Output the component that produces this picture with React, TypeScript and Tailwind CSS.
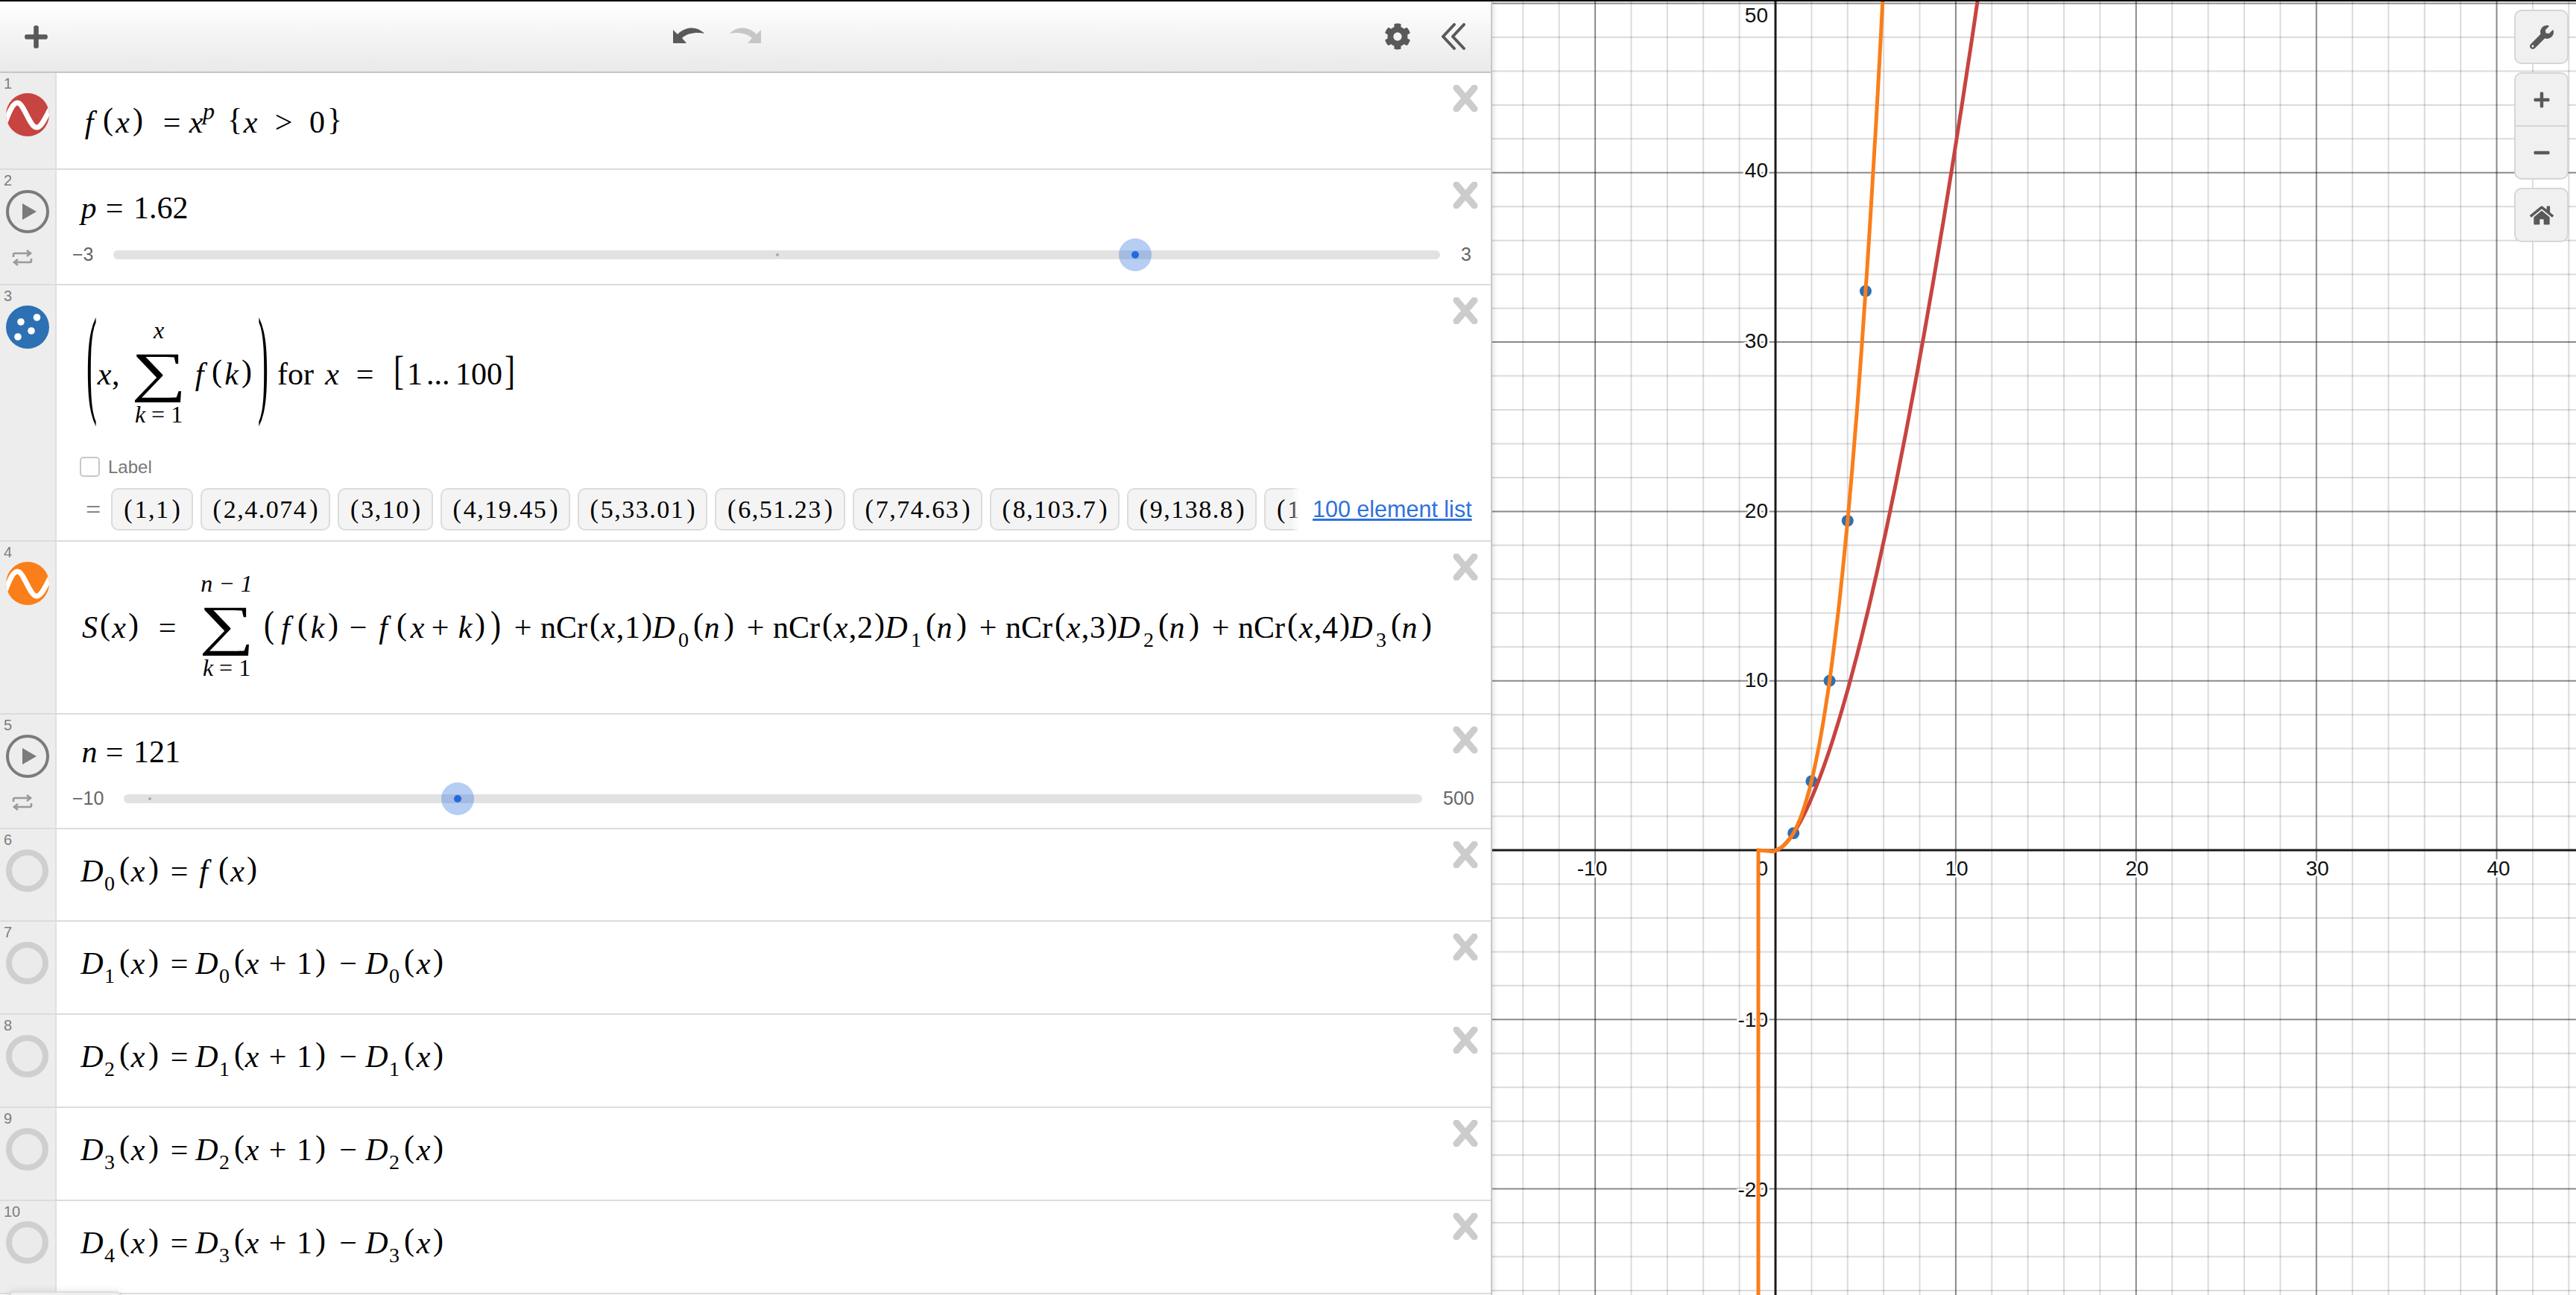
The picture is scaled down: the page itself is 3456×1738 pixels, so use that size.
import type { ReactNode } from "react"
import { FaCog, FaHome, FaMinus, FaPlus, FaWrench } from "react-icons/fa"

const RED = "#c74440"
const ORANGE = "#fa7e19"
const BLUE = "#2d70b3"

type Kids = { children?: ReactNode; className?: string }

// plain math token, width given by the caller so the formula lines up
function T({ className = "", children }: Kids) {
  return <span className={`shrink-0 text-center ${className}`}>{children}</span>
}
function V({ className = "", children }: Kids) {
  return <T className={`italic ${className}`}>{children}</T>
}
function Sub({ className = "w-[14px]", children }: Kids) {
  return <T className={`translate-y-[17px] text-[28px] ${className}`}>{children}</T>
}
// bracket, lifted onto the math axis
function P({ className = "w-[13px]", children }: Kids) {
  return <T className={`-translate-y-[4px] ${className}`}>{children}</T>
}
// bracket stretched round a taller expression
function Big({ className = "", children }: Kids) {
  return <T className={`w-[14px] origin-[50%_60%] ${className}`}>{children}</T>
}
// square bracket, stretched about the baseline
function Square({ className = "", children }: Kids) {
  return <T className={`w-[13px] origin-[50%_85%] scale-y-[1.3] ${className}`}>{children}</T>
}
function Line({ className = "", children }: Kids) {
  return (
    <div className={`flex h-[40px] items-center whitespace-nowrap font-['Liberation_Serif',serif] text-[42px] leading-[40px] text-black ${className}`}>
      {children}
    </div>
  )
}

function Sum({ upper }: { upper: ReactNode }) {
  return (
    <span className="flex w-[66px] shrink-0 -translate-y-[3px] flex-col items-center text-[32px] leading-[28px]">
      <span className="h-[28px] italic">{upper}</span>
      <span className="flex h-[85px] scale-x-[1.4] items-center text-[74px] leading-none">∑</span>
      <span className="h-[28px]">
        <i>k</i> = 1
      </span>
    </span>
  )
}

function WaveIcon({ color }: { color: string }) {
  return (
    <svg width="58" height="58" viewBox="0 0 58 58">
      <clipPath id={`w${color}`}>
        <circle cx="29" cy="29" r="29" />
      </clipPath>
      <circle cx="29" cy="29" r="29" fill={color} />
      <path
        d="M-2 42C6 20 11 12 16 13C24 14 32 46 41 46C48 46 53 32 60 20"
        fill="none"
        stroke="#fff"
        strokeWidth="7"
        clipPath={`url(#w${color})`}
      />
    </svg>
  )
}

function PointsIcon() {
  return (
    <svg width="58" height="58" viewBox="0 0 58 58">
      <circle cx="29" cy="29" r="29" fill={BLUE} />
      <circle cx="20" cy="22" r="4.8" fill="#fff" />
      <circle cx="41.5" cy="16" r="4.8" fill="#fff" />
      <circle cx="34" cy="34" r="4.8" fill="#fff" />
      <circle cx="16" cy="42" r="4.8" fill="#fff" />
    </svg>
  )
}

function PlayIcon() {
  return (
    <svg width="58" height="58" viewBox="0 0 58 58">
      <circle cx="29" cy="29" r="27" fill="none" stroke="#7b7b7b" strokeWidth="4" />
      <path d="M22 18L41 29L22 40Z" fill="#7b7b7b" />
    </svg>
  )
}

function RepeatIcon() {
  return (
    <svg width="30" height="22" viewBox="0 0 30 22" fill="none" stroke="#9a9a9a" strokeWidth="2.6" className="ml-[15px] mt-[22px]">
      <path d="M3 10V7Q3 5 5 5H26M21 1L26 5L21 9" />
      <path d="M27 12V15Q27 17 25 17H4M9 13L4 17L9 21" />
    </svg>
  )
}

function HiddenIcon() {
  return <div className="size-[57px] rounded-full border-[8px] border-[#cfcfcf] bg-[#ebebeb]" />
}

function Row({ n, h, icon, extra, children }: { n: number; h: string; icon: ReactNode; extra?: ReactNode; children: ReactNode }) {
  return (
    <div className={`relative flex border-b-2 border-[#dcdcdc] ${h}`}>
      <div className="w-[76px] shrink-0 border-r-2 border-[#dfdfdf] bg-[#ededed]">
        <div className="ml-[5px] mt-[4px] h-[20px] text-[20px] leading-[20px] text-[#7d7d7d]">{n}</div>
        <div className="ml-[8px] mt-[3px]">{icon}</div>
        {extra}
      </div>
      <div className="min-w-0 flex-1">{children}</div>
      <svg width="36" height="36" viewBox="0 0 36 36" className="absolute left-[1948px] top-[16px]">
        <path d="M6 4L30 32M30 4L6 32" stroke="#cccccc" strokeWidth="9" strokeLinecap="round" />
      </svg>
    </div>
  )
}

function Slider({ min, max, track, gap, at, tick }: { min: string; max: string; track: string; gap: string; at: number; tick: number }) {
  return (
    <div className="mt-[37px] flex h-[12px] items-center pl-[21px] text-[25px] text-[#666]">
      <span className={gap}>{min}</span>
      <div className={`relative h-[12px] shrink-0 rounded-full bg-[#e2e2e2] ${track}`}>
        <span className="absolute top-[4px] size-[4px] rounded-full bg-[#a8a8a8]" style={{ left: tick - 2 }} />
        <span className="absolute -top-[16px] size-[44px] rounded-full bg-[#2e6fe0]/35" style={{ left: at - 22 }} />
        <span className="absolute top-[1px] size-[10px] rounded-full bg-[#2468dc]" style={{ left: at - 5 }} />
      </div>
      <span className="ml-[28px]">{max}</span>
    </div>
  )
}

function DRow({ n, i, a }: { n: number; i: string; a: string }) {
  return (
    <Row n={n} h="h-[125px]" icon={<HiddenIcon />}>
      <Line className="ml-[31px] mt-[36px]">
        <DHead i={i} />
        <V className="ml-[7px] w-[33px]">D</V>
        <Sub>{a}</Sub>
        <P className="ml-[6px] w-[13px]">(</P>
        <V className="w-[22px]">x</V>
        <T className="ml-[8px] w-[31px]">+</T>
        <T className="ml-[10px] w-[20px]">1</T>
        <P className="ml-[5px] w-[13px]">)</P>
        <T className="ml-[16px] w-[30px]">−</T>
        <V className="ml-[7px] w-[33px]">D</V>
        <Sub>{a}</Sub>
        <P className="ml-[6px] w-[13px]">(</P>
        <V className="w-[26px]">x</V>
        <P>)</P>
      </Line>
    </Row>
  )
}

// D_i(x) =
function DHead({ i }: { i: string }) {
  return (
    <>
      <V className="w-[33px]">D</V>
      <Sub>{i}</Sub>
      <P className="ml-[6px] w-[13px]">(</P>
      <V className="w-[24px]">x</V>
      <P className="ml-[2px] w-[13px]">)</P>
      <T className="ml-[15px] w-[27px]">=</T>
    </>
  )
}

function Term({ k, d }: { k: string; d: string }) {
  return (
    <>
      <T className="ml-[14px] w-[31px]">+</T>
      <T className="ml-[8px] w-[61px]">nCr</T>
      <P className="ml-[5px] w-[13px]">(</P>
      <V className="ml-[2px] w-[20px]">x</V>
      <T className="w-[12px]">,</T>
      <T className="w-[18px]">{k}</T>
      <P className="ml-[5px] w-[13px]">)</P>
      <V className="w-[33px]">D</V>
      <Sub className="w-[20px]">{d}</Sub>
      <P className="ml-[3px] w-[13px]">(</P>
      <V className="w-[24px]">n</V>
      <P className="ml-[4px] w-[13px]">)</P>
    </>
  )
}

const chips = [
  { w: "w-[110px]", t: "1,1" },
  { w: "w-[174px]", t: "2,4.074" },
  { w: "w-[128px]", t: "3,10" },
  { w: "w-[174px]", t: "4,19.45" },
  { w: "w-[174px]", t: "5,33.01" },
  { w: "w-[175px]", t: "6,51.23" },
  { w: "w-[174px]", t: "7,74.63" },
  { w: "w-[174px]", t: "8,103.7" },
  { w: "w-[174px]", t: "9,138.8" },
]

const chipBox = "flex h-[57px] shrink-0 items-center rounded-[10px] border-2 border-[#dcdcdc] bg-[#f4f4f4] font-['Liberation_Serif',serif] text-[34px] leading-[34px] text-black"

function ListRow() {
  return (
    <div className="mt-[15px] flex h-[57px] items-center pl-[39px]">
      <span className="w-[34px] shrink-0 font-['Liberation_Serif',serif] text-[36px] text-[#777]">=</span>
      <div className="relative flex w-[1595px] shrink-0 gap-[10px] overflow-hidden">
        {chips.map((c) => (
          <div key={c.t} className={`${chipBox} justify-center ${c.w}`}>
            <span className="origin-[50%_84%] scale-y-[1.08]">(</span>
            <span className="mx-[3px] tracking-[1.5px]">{c.t}</span>
            <span className="origin-[50%_84%] scale-y-[1.08]">)</span>
          </div>
        ))}
        {/* the tenth point runs under the fade, only its start shows */}
        <div className={`${chipBox} w-[80px] pl-[15px]`}>
          <span className="origin-[50%_84%] scale-y-[1.08]">(</span>
          <span className="ml-[3px]">1</span>
        </div>
        <div className="absolute right-0 top-0 h-[57px] w-[12px] bg-gradient-to-r from-white/0 to-white" />
      </div>
      <span className="ml-[17px] whitespace-nowrap text-[30.5px] text-[#2f72dc] underline">100 element list</span>
    </div>
  )
}

function Toolbar() {
  return (
    <div className="relative flex h-[96px] items-center justify-between border-b-2 border-[#c6c6c6] bg-gradient-to-b from-[#ffffff] to-[#e9e9e9] text-[#595959]">
      <FaPlus size={35} className="ml-[31px]" />
      <div className="absolute left-[903px] top-[33px] flex gap-[34px]">
        <svg width="42" height="23" viewBox="0 0 42 23" fill="#595959">
          <path d="M0 5V23H18L12 16C20 9 32 8 42 10C34 2 20-2 6 11Z" />
        </svg>
        <svg width="42" height="23" viewBox="0 0 42 23" fill="#c6c6c6" className="-scale-x-100">
          <path d="M0 5V23H18L12 16C20 9 32 8 42 10C34 2 20-2 6 11Z" />
        </svg>
      </div>
      <div className="flex items-center">
        <FaCog size={36} />
        <svg width="33" height="36" viewBox="0 0 33 36" fill="none" stroke="#595959" strokeWidth="4" strokeLinecap="round" strokeLinejoin="round" className="ml-[41px] mr-[33px]">
          <path d="M17 2L2 18L17 34M30 2L15 18L30 34" />
        </svg>
      </div>
    </div>
  )
}

const X0 = 2382
const Y0 = 1141
const SX = 24.19
const SY = 22.73
const px = (x: number) => X0 + SX * x
const py = (y: number) => Y0 - SY * y

function plot(fn: (x: number) => number, to: number, step: number) {
  let d = ""
  for (let x = step; x <= to; x += step) d += `L${px(x).toFixed(1)} ${py(fn(x)).toFixed(1)}`
  return d
}

const f = (x: number) => Math.pow(x, 1.62)
const S = (x: number) => Math.pow(x, 2.62) / 2.62 + Math.pow(x, 1.62) / 2 + 0.135 * Math.pow(x, 0.62)

const range = (from: number, to: number) => Array.from({ length: to - from + 1 }, (_, i) => from + i)

function Graph() {
  return (
    <svg viewBox="2002 2 1454 1736" width="1454" height="1736" className="block">
      {range(-8, 22).map((k) => (
        <line key={k} x1={px(k * 2)} x2={px(k * 2)} y1="0" y2="1738" stroke="#000" strokeOpacity={k % 5 === 0 ? 0.46 : 0.14} strokeWidth="2" />
      ))}
      {range(-13, 25).map((k) => (
        <line key={k} x1="2000" x2="3456" y1={py(k * 2)} y2={py(k * 2)} stroke="#000" strokeOpacity={k % 5 === 0 ? 0.46 : 0.14} strokeWidth="2" />
      ))}
      <line x1={X0} x2={X0} y1="0" y2="1738" stroke="#1a1a1a" strokeWidth="3" />
      <line x1="2000" x2="3456" y1={Y0} y2={Y0} stroke="#1a1a1a" strokeWidth="3" />
      <g fontFamily="'Liberation Sans', sans-serif" fontSize="28" fill="#111" stroke="#fff" strokeWidth="5" style={{ paintOrder: "stroke" }}>
        <text x="2136" y="1175" textAnchor="middle">-10</text>
        <text x="2625" y="1175" textAnchor="middle">10</text>
        <text x="2867" y="1175" textAnchor="middle">20</text>
        <text x="3109" y="1175" textAnchor="middle">30</text>
        <text x="3352" y="1175" textAnchor="middle">40</text>
        <text x="2372" y="1175" textAnchor="end">0</text>
        <text x="2372" y="30" textAnchor="end">50</text>
        <text x="2372" y="238" textAnchor="end">40</text>
        <text x="2372" y="467" textAnchor="end">30</text>
        <text x="2372" y="695" textAnchor="end">20</text>
        <text x="2372" y="922" textAnchor="end">10</text>
        <text x="2372" y="1378" textAnchor="end">-10</text>
        <text x="2372" y="1606" textAnchor="end">-20</text>
      </g>
      {[[1, 1], [2, 4.074], [3, 10], [4, 19.45], [5, 33.01]].map(([x, y]) => (
        <circle key={x} cx={px(x)} cy={py(y)} r="8" fill={BLUE} />
      ))}
      <path d={`M${X0} ${Y0}${plot(f, 11.7, 0.1)}`} fill="none" stroke={RED} strokeWidth="5" />
      <path d={`M2359 1738V1141L2380 1143${plot(S, 6.2, 0.05)}`} fill="none" stroke={ORANGE} strokeWidth="5" />
    </svg>
  )
}

function ZoomButtons() {
  const box = "w-[73px] rounded-[10px] border-2 border-[#d6d6d6] bg-[#f0f0f0] text-[#595959]"
  return (
    <div className="absolute left-[1371px] top-[11px] flex flex-col gap-[11px]">
      <div className={`${box} flex h-[73px] items-center justify-center`}>
        <FaWrench size={32} />
      </div>
      <div className={`${box} flex h-[144px] flex-col`}>
        <div className="flex h-[71px] items-center justify-center border-b-2 border-[#d6d6d6]">
          <FaPlus size={24} />
        </div>
        <div className="flex flex-1 items-center justify-center">
          <FaMinus size={24} />
        </div>
      </div>
      <div className={`${box} flex h-[73px] items-center justify-center`}>
        <FaHome size={32} />
      </div>
    </div>
  )
}

export default function App() {
  return (
    <div className="flex h-[1738px] w-[3456px] overflow-hidden border-t-2 border-black bg-white font-['Liberation_Sans',sans-serif]">
      <div className="relative z-10 w-[2002px] shrink-0 overflow-hidden border-r-2 border-[#c8c8c8] bg-white shadow-[2px_0_6px_rgba(0,0,0,0.12)]">
        <Toolbar />
        <Row n={1} h="h-[130px]" icon={<WaveIcon color={RED} />}>
          <Line className="ml-[31px] mt-[46px]">
            <V className="w-[25px]">f</V>
            <P className="ml-[6px] w-[13px]">(</P>
            <V className="w-[27px]">x</V>
            <P>)</P>
            <T className="ml-[24px] w-[31px]">=</T>
            <V className="ml-[7px] w-[20px]">x</V>
            <V className="-ml-[3px] w-[20px] -translate-y-[15px] text-[32px]">p</V>
            <P className="ml-[15px] w-[19px]">{"{"}</P>
            <V className="w-[24px]">x</V>
            <T className="ml-[19px] w-[27px]">&gt;</T>
            <T className="ml-[21px] w-[20px]">0</T>
            <P className="ml-[4px] w-[19px]">{"}"}</P>
          </Line>
        </Row>
        <Row n={2} h="h-[155px]" icon={<PlayIcon />} extra={<RepeatIcon />}>
          <Line className="ml-[31px] mt-[31px]">
            <V className="w-[24px]">p</V>
            <T className="ml-[8px] w-[29px]">=</T>
            <T className="ml-[11px]">1.62</T>
          </Line>
          <Slider min="−3" max="3" gap="w-[55px]" track="w-[1780px]" at={1371} tick={891} />
        </Row>
        <Row n={3} h="h-[344px]" icon={<PointsIcon />}>
          <Line className="ml-[40px] mt-[99px]">
            <Big className="-translate-y-[6px] scale-y-[3.84]">(</Big>
            <V className="w-[20px]">x</V>
            <T className="w-[10px]">,</T>
            <span className="ml-[20px]">
              <Sum upper="x" />
            </span>
            <V className="ml-[9px] w-[25px]">f</V>
            <P className="ml-[4px] w-[13px]">(</P>
            <V className="w-[27px]">k</V>
            <P>)</P>
            <Big className="ml-[9px] -translate-y-[6px] scale-y-[3.84]">)</Big>
            <T className="ml-[12px] w-[48px]">for</T>
            <V className="ml-[16px] w-[19px]">x</V>
            <T className="ml-[19px] w-[31px]">=</T>
            <Square className="ml-[23px]">[</Square>
            <T className="ml-[5px] w-[18px]">1</T>
            <T className="ml-[8px] w-[31px]">...</T>
            <T className="ml-[8px]">100</T>
            <Square className="ml-[3px]">]</Square>
          </Line>
          <div className="ml-[31px] mt-[91px] flex h-[27px] items-center">
            <span className="size-[27px] rounded-[5px] border-2 border-[#c8c8c8] bg-white" />
            <span className="ml-[11px] text-[24px] text-[#777]">Label</span>
          </div>
          <ListRow />
        </Row>
        <Row n={4} h="h-[232px]" icon={<WaveIcon color={ORANGE} />}>
          <Line className="ml-[31px] mt-[95px]">
            <V className="w-[27px]">S</V>
            <P>(</P>
            <V className="w-[25px]">x</V>
            <P>)</P>
            <T className="ml-[25px] w-[29px]">=</T>
            <span className="ml-[32px]">
              <Sum upper="n − 1" />
            </span>
            <Big className="ml-[17px] -translate-y-[3px] scale-y-[1.23]">(</Big>
            <V className="ml-[1px] w-[28px]">f</V>
            <P className="ml-[2px] w-[13px]">(</P>
            <V className="w-[28px]">k</V>
            <P>)</P>
            <T className="ml-[12px] w-[31px]">−</T>
            <V className="ml-[5px] w-[26px]">f</V>
            <P className="ml-[5px] w-[13px]">(</P>
            <V className="w-[30px]">x</V>
            <T className="w-[31px]">+</T>
            <V className="ml-[7px] w-[22px]">k</V>
            <P className="ml-[2px] w-[13px]">)</P>
            <Big className="ml-[8px] -translate-y-[3px] scale-y-[1.23]">)</Big>
            <Term k="1" d="0" />
            <Term k="2" d="1" />
            <Term k="3" d="2" />
            <Term k="4" d="3" />
          </Line>
        </Row>
        <Row n={5} h="h-[154px]" icon={<PlayIcon />} extra={<RepeatIcon />}>
          <Line className="ml-[31px] mt-[30px]">
            <V className="w-[26px]">n</V>
            <T className="ml-[6px] w-[29px]">=</T>
            <T className="ml-[11px]">121</T>
          </Line>
          <Slider min="−10" max="500" gap="w-[69px]" track="w-[1742px]" at={448} tick={35} />
        </Row>
        <Row n={6} h="h-[124px]" icon={<HiddenIcon />}>
          <Line className="ml-[31px] mt-[36px]">
            <DHead i="0" />
            <V className="ml-[5px] w-[28px]">f</V>
            <P className="ml-[6px] w-[13px]">(</P>
            <V className="w-[25px]">x</V>
            <P>)</P>
          </Line>
        </Row>
        <DRow n={7} i="1" a="0" />
        <DRow n={8} i="2" a="1" />
        <DRow n={9} i="3" a="2" />
        <DRow n={10} i="4" a="3" />
        <div className="absolute left-[11px] top-[1731px] h-[20px] w-[152px] rounded-t-[8px] border-2 border-[#dcdcdc] bg-[#f0f0f0] shadow-[0_-2px_8px_rgba(0,0,0,0.08)]" />
      </div>
      <div className="relative min-w-0 flex-1">
        <Graph />
        <ZoomButtons />
      </div>
    </div>
  )
}
